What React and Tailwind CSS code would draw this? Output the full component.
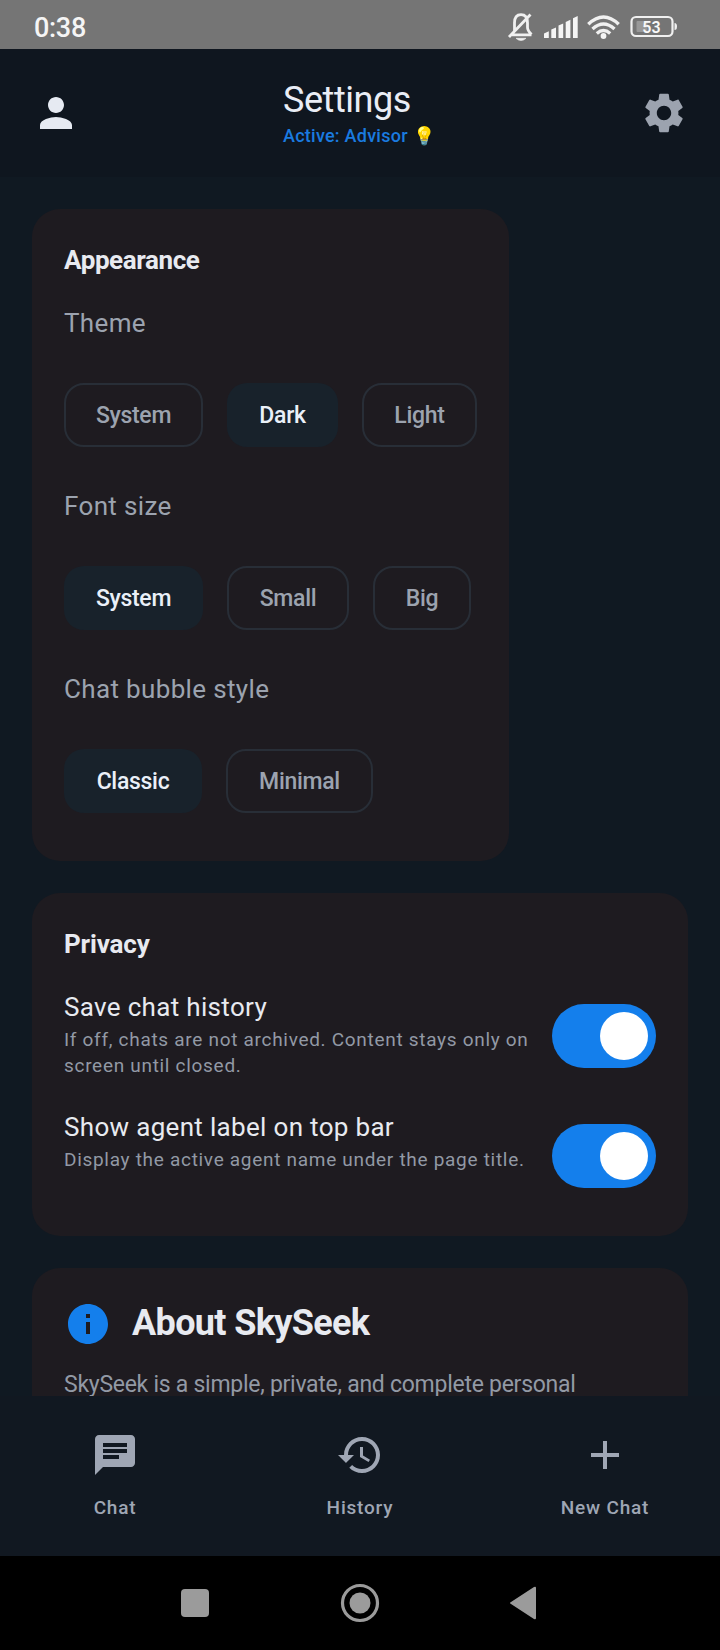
import React from "react";

const Icon = ({ d, className }) => (
  <svg viewBox="0 0 24 24" className={className} fill="currentColor">
    <path d={d} />
  </svg>
);

const ICONS = {
  person:
    "M12 12c2.21 0 4-1.79 4-4s-1.79-4-4-4-4 1.79-4 4 1.79 4 4 4zm0 2c-2.67 0-8 1.34-8 4v2h16v-2c0-2.66-5.33-4-8-4z",
  settings:
    "M19.14 12.94c.04-.3.06-.61.06-.94 0-.32-.02-.64-.07-.94l2.03-1.58c.18-.14.23-.41.12-.61l-1.92-3.32c-.12-.22-.37-.29-.59-.22l-2.39.96c-.5-.38-1.03-.7-1.62-.94l-.36-2.54c-.04-.24-.24-.41-.48-.41h-3.84c-.24 0-.43.17-.47.41l-.36 2.54c-.59.24-1.13.57-1.62.94l-2.39-.96c-.22-.08-.47 0-.59.22L2.74 8.87c-.12.21-.08.47.12.61l2.03 1.58c-.05.3-.09.63-.09.94s.02.64.07.94l-2.03 1.58c-.18.14-.23.41-.12.61l1.92 3.32c.12.22.37.29.59.22l2.39-.96c.5.38 1.03.7 1.62.94l.36 2.54c.05.24.24.41.48.41h3.84c.24 0 .44-.17.47-.41l.36-2.54c.59-.24 1.13-.56 1.62-.94l2.39.96c.22.08.47 0 .59-.22l1.92-3.32c.12-.22.07-.47-.12-.61l-2.01-1.58zM12 15.6c-1.98 0-3.6-1.62-3.6-3.6s1.62-3.6 3.6-3.6 3.6 1.62 3.6 3.6-1.62 3.6-3.6 3.6z",
  info: "M12 2C6.48 2 2 6.48 2 12s4.48 10 10 10 10-4.48 10-10S17.52 2 12 2zm1 15h-2v-6h2v6zm0-8h-2V7h2v2z",
  chat: "M20 2H4c-1.1 0-1.99.9-1.99 2L2 22l4-4h14c1.1 0 2-.9 2-2V4c0-1.1-.9-2-2-2zM6 9h12v2H6V9zm8 5H6v-2h8v2zm4-6H6V6h12v2z",
  history:
    "M13 3c-4.97 0-9 4.03-9 9H1l3.89 3.89.07.14L9 12H6c0-3.87 3.13-7 7-7s7 3.13 7 7-3.13 7-7 7c-1.93 0-3.68-.79-4.94-2.06l-1.42 1.42C8.27 19.99 10.51 21 13 21c4.97 0 9-4.03 9-9s-4.03-9-9-9zm-1 5v5l4.28 2.54.72-1.21-3.5-2.08V8H12z",
  add: "M19 13h-6v6h-2v-6H5v-2h6V5h2v6h6v2z",
};

function StatusBar() {
  return (
    <div className="flex h-[49px] shrink-0 items-center bg-[#757575] pl-[34px] text-[#f5f5f5]">
      <span className="mt-[6px] w-[472px] text-[27px] leading-8 font-medium tracking-[-0.3px]">0:38</span>
      <svg width="180" height="49" viewBox="506 0 180 49" fill="none" stroke="#f0f0f0">
        <path
          d="M512 34.8h19.5M514.5 31V23q0-8.300 6.500-8.300 6.500 0 6.500 8.300v4.500q0 3 4 7M509 37l21.500-22.500"
          strokeWidth="2.800"
        />
        <path d="M516 38.300q5 4.500 10 0z" fill="#f0f0f0" stroke="#f0f0f0" strokeWidth="0.600" />
        <g fill="#f5f5f5" stroke="none">
          <path d="M544 38v-4.500l4.800-2.200V38zM551.300 38v-8.500l4.700-2V38zM558.500 38V25.500l4.700-2V38zM565.700 38V22l4.700-2.200V38zM573 38V18.300l4.700-2.300v22z" />
        </g>
        <g strokeWidth="3.400">
          <path d="M588.300 24.200q15.200-14.500 30.400 0M592.500 29q11-10 22 0M596.800 33.500q6.700-5.800 13.400 0" />
          <circle cx="603.500" cy="36" r="2.900" fill="#f5f5f5" stroke="none" />
        </g>
        <rect x="631.500" y="17" width="41" height="19" rx="4.500" strokeWidth="2.200" />
        <rect x="636.500" y="21" width="11" height="11" rx="1" fill="#989898" stroke="none" />
        <path d="M674.500 23q2.500 0 2.500 3.500t-2.500 3.500z" fill="#f0f0f0" stroke="none" />
        <text x="651.500" y="32.600" textAnchor="middle" fontSize="16" fontWeight="600" fill="#f8f8f8" stroke="none">
          53
        </text>
      </svg>
    </div>
  );
}

function Header() {
  return (
    <header className="flex h-[128px] shrink-0 items-center justify-between bg-[#0f161f] px-8">
      <Icon d={ICONS.person} className="size-12 text-[#e6eaf2]" />
      <div className="ml-3 flex w-[166px] flex-col">
        <h1 className="text-[36px] leading-[44px] tracking-[-0.45px] whitespace-nowrap text-[#e9edf5]">Settings</h1>
        <div className="mt-[1px] flex items-center text-[18px] leading-[26px] font-medium tracking-[0.25px] whitespace-nowrap text-[#1a7be0]">
          Active: Advisor <span className="ml-[5px] text-[18px] tracking-normal">💡</span>
        </div>
      </div>
      <Icon d={ICONS.settings} className="size-12 text-[#9ca3af]" />
    </header>
  );
}

function Chip({ label, selected, className }) {
  return (
    <button
      className={`h-16 shrink-0 rounded-[20px] pt-[2px] text-[23px] font-medium tracking-[-0.3px] ${
        selected ? "bg-[#18222b] text-[#eaf0f8]" : "border-2 border-[#282e37] text-[#9ca3af]"
      } ${className}`}
    >
      {label}
    </button>
  );
}

function ChipGroup({ label, className, children }) {
  return (
    <div className={className}>
      <div className="text-[26px] leading-[38px] tracking-[0.35px] text-[#9ca3af]">{label}</div>
      <div className="mt-[41px] flex gap-6">{children}</div>
    </div>
  );
}

function SectionTitle({ className, children }) {
  return <h2 className={`text-[26px] leading-[38px] font-bold text-[#e8eaf0] ${className}`}>{children}</h2>;
}

function ToggleRow({ title, text }) {
  return (
    <div className="flex h-[120px] justify-between">
      <div className="w-[480px] pt-3">
        <div className="text-[26px] leading-[38px] tracking-[0.32px] text-[#e8eaf0]">{title}</div>
        <p className="mt-[1px] text-[19px] leading-[26px] tracking-[0.7px] text-[#9299a5]">{text}</p>
      </div>
      <div className="mt-7 flex h-16 w-[104px] shrink-0 items-center justify-end rounded-full bg-[#147fec] px-2">
        <div className="size-12 rounded-full bg-white" />
      </div>
    </div>
  );
}

function NavItem({ d, label, className }) {
  return (
    <div className={`flex flex-col items-center ${className}`}>
      <Icon d={d} className="size-12" />
      <span className="mt-4 text-[19px] leading-[26px] font-medium tracking-[0.8px] whitespace-nowrap">{label}</span>
    </div>
  );
}

export default function App() {
  return (
    <div className="flex h-[1650px] w-[720px] flex-col overflow-hidden bg-[#101922] font-['Roboto',sans-serif]">
      <StatusBar />
      <Header />
      <main className="flex h-[1219px] shrink-0 flex-col items-start gap-8 overflow-hidden px-8 pt-8">
        <section className="h-[652px] w-[477px] shrink-0 rounded-[28px] bg-[#1e1b20] p-8">
          <SectionTitle className="tracking-[-0.4px]">Appearance</SectionTitle>
          <ChipGroup label="Theme" className="mt-[25px]">
            <Chip label="System" className="w-[139px]" />
            <Chip label="Dark" selected className="w-[111px]" />
            <Chip label="Light" className="w-[115px]" />
          </ChipGroup>
          <ChipGroup label="Font size" className="mt-10">
            <Chip label="System" selected className="w-[139px]" />
            <Chip label="Small" className="w-[122px]" />
            <Chip label="Big" className="w-[98px]" />
          </ChipGroup>
          <ChipGroup label="Chat bubble style" className="mt-10">
            <Chip label="Classic" selected className="w-[138px]" />
            <Chip label="Minimal" className="w-[147px]" />
          </ChipGroup>
        </section>

        <section className="h-[343px] w-full shrink-0 rounded-[28px] bg-[#1e1b20] px-8 pt-8">
          <SectionTitle className="tracking-[-0.15px]">Privacy</SectionTitle>
          <div className="mt-[13px]">
            <ToggleRow
              title="Save chat history"
              text="If off, chats are not archived. Content stays only on screen until closed."
            />
            <ToggleRow title="Show agent label on top bar" text="Display the active agent name under the page title." />
          </div>
        </section>

        <section className="h-[300px] w-full shrink-0 rounded-[28px] bg-[#1e1b20] px-8 pt-8">
          <div className="flex gap-5">
            <Icon d={ICONS.info} className="size-12 text-[#147fec]" />
            <h2 className="text-[36px] leading-[46px] font-bold tracking-[-0.65px] text-[#e8eaf0]">About SkySeek</h2>
          </div>
          <p className="mt-[21px] text-[23px] leading-8 tracking-[-0.27px] whitespace-nowrap text-[#9299a5]">
            SkySeek is a simple, private, and complete personal
          </p>
        </section>
      </main>

      <nav className="flex h-[160px] shrink-0 justify-between bg-[#111821] px-[15px] pt-[35px] text-[#9fa6b4]">
        <NavItem d={ICONS.chat} label="Chat" className="w-[200px]" />
        <NavItem d={ICONS.history} label="History" className="w-[200px]" />
        <NavItem d={ICONS.add} label="New Chat" className="w-[200px]" />
      </nav>

      <div className="flex h-[94px] shrink-0 justify-center bg-black">
        <svg width="420" height="94" viewBox="150 0 420 94" fill="#9b9b9b">
          <rect x="181" y="33" width="28" height="28" rx="4" />
          <circle cx="360" cy="47" r="17.500" fill="none" stroke="#9b9b9b" strokeWidth="3.200" />
          <circle cx="360" cy="47" r="10.500" />
          <path d="M511 46l23-15q2-1 2 1v30q0 2-2 1l-23-15q-2-1 0-2z" />
        </svg>
      </div>
    </div>
  );
}
